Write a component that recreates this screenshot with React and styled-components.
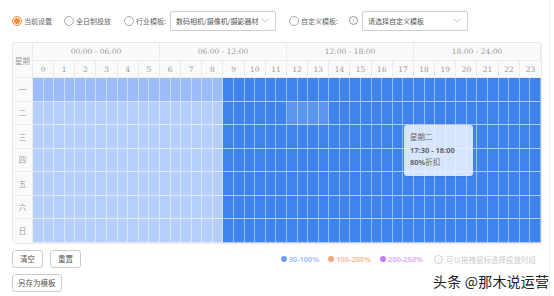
import React from 'react'
import styled, { createGlobalStyle } from 'styled-components'

const GlobalStyle = createGlobalStyle`
  html, body {
    margin: 0;
    padding: 0;
    background: #fff;
  }
  body {
    font-family: "Noto Sans CJK SC", "Noto Sans", sans-serif;
    color: #666;
  }
`

const Page = styled.div`
  position: relative;
  width: 554px;
  height: 296px;
  padding: 10px 0 0 12px;
  box-sizing: border-box;
  overflow: hidden;
`

const EdgeLine = styled.div`
  position: absolute;
  top: 0;
  right: 4px;
  bottom: 0;
  width: 1px;
  background: #eef0f3;
`

const Toolbar = styled.div`
  display: flex;
  align-items: center;
  height: 21px;
  font-size: 7px;
  color: #666;
`

const RadioLabel = styled.label`
  display: flex;
  align-items: center;
  gap: 2px;
  margin-right: ${({ gap }) => gap || 10}px;
  white-space: nowrap;
`

const RadioDot = styled.span`
  width: 10px;
  height: 10px;
  border-radius: 50%;
  border: 1px solid ${({ checked }) => (checked ? '#fa8c35' : '#aaa')};
  box-sizing: border-box;
  display: flex;
  align-items: center;
  justify-content: center;
  background: #fff;

  &::after {
    content: '';
    display: ${({ checked }) => (checked ? 'block' : 'none')};
    width: 6px;
    height: 6px;
    border-radius: 50%;
    background: #fa8c35;
  }
`

const Select = styled.div`
  width: ${({ w }) => w}px;
  height: 20px;
  box-sizing: border-box;
  border: 1px solid #cfcfcf;
  border-radius: 2px;
  display: flex;
  align-items: center;
  justify-content: space-between;
  padding: 0 6px 0 5px;
  margin-right: ${({ mr }) => mr || 0}px;
  font-size: 7px;
  color: #555;
  white-space: nowrap;
`

const Help = styled.span`
  width: 7px;
  height: 7px;
  border: 1px solid #999;
  border-radius: 50%;
  font-size: 5px;
  line-height: 7px;
  text-align: center;
  color: #999;
  margin: 0 4px 0 1px;
`

const Table = styled.div`
  margin-top: 11px;
  width: 530px;
  border: 1px solid #e8e8e8;
  border-radius: 3px;
  overflow: hidden;
  box-sizing: border-box;
  position: relative;
`

const Head = styled.div`
  display: grid;
  grid-template-columns: 20px repeat(24, 1fr);
  grid-template-rows: 18px 17px;
  background: #fafafa;
  color: #999;
  font-size: 7.5px;
`

const HeadCell = styled.div`
  display: flex;
  align-items: center;
  justify-content: center;
  border-right: 1px solid #ececec;
  border-bottom: 1px solid #ececec;
  font-family: ${({ num }) => (num ? '"DejaVu Serif", serif' : 'inherit')};
  font-size: 7.5px;
  grid-column: ${({ span }) => span || 'auto'};
  grid-row: ${({ rows }) => rows || 'auto'};

  &:last-child {
    border-right: none;
  }
`

const Body = styled.div`
  display: grid;
  grid-template-columns: 20px 1fr;
`

const DayCol = styled.div`
  display: grid;
  grid-template-rows: repeat(7, 1fr);
  background: #fafafa;
  border-right: 1px solid #ececec;
`

const DayCell = styled.div`
  display: flex;
  align-items: center;
  justify-content: center;
  font-size: 7.5px;
  color: #999;
  border-bottom: ${({ last }) => (last ? 'none' : '1px solid #ececec')};
`

const Grid = styled.div`
  display: grid;
  grid-template-columns: repeat(48, 1fr);
  grid-template-rows: repeat(7, 23.5px);
`

const Cell = styled.div`
  background: ${({ tone }) => tone};
  border-right: 1px solid rgba(255, 255, 255, 0.45);
  border-bottom: 1px solid rgba(255, 255, 255, 0.6);
`

const Tooltip = styled.div`
  position: absolute;
  left: 391px;
  top: 82px;
  width: 69px;
  height: 51px;
  box-sizing: border-box;
  padding: 6px 6px;
  background: rgba(236, 242, 253, 0.88);
  border-radius: 3px;
  box-shadow: 0 1px 3px rgba(0, 0, 0, 0.08);
  font-size: 7.5px;
  color: #666;
  line-height: 12.5px;
  display: flex;
  flex-direction: column;
`

const TipLine = styled.div`
  font-weight: ${({ bold }) => (bold ? 700 : 400)};
  font-family: ${({ bold }) => (bold ? '"Noto Sans", sans-serif' : 'inherit')};
`

const Footer = styled.div`
  display: flex;
  justify-content: space-between;
  align-items: flex-start;
  width: 530px;
  margin-top: 6px;
`

const Buttons = styled.div`
  display: flex;
  flex-direction: column;
  gap: 6px;
`

const BtnRow = styled.div`
  display: flex;
  gap: 7px;
`

const Button = styled.button`
  height: 18px;
  padding: 0 ${({ pad }) => pad || 6}px;
  border: 1px solid #ccc;
  border-radius: 3px;
  background: #fff;
  font-family: inherit;
  font-size: 7.5px;
  color: #555;
  cursor: pointer;
`

const Legend = styled.div`
  display: flex;
  align-items: center;
  gap: 9px;
  margin-top: 4px;
  margin-right: 6px;
  font-size: 7.5px;
  font-family: "Noto Sans", sans-serif;
  font-weight: 700;
`

const LegendItem = styled.span`
  display: flex;
  align-items: center;
  gap: 2px;
  color: ${({ color }) => color};

  &::before {
    content: '';
    width: 6px;
    height: 6px;
    border-radius: 50%;
    background: ${({ dot }) => dot};
  }
`

const Hint = styled.span`
  display: flex;
  align-items: center;
  gap: 3px;
  margin-left: 2px;
  color: #ccc;
  font-weight: 400;
  font-family: "Noto Sans CJK SC", sans-serif;
`

const HintIcon = styled.span`
  width: 7px;
  height: 7px;
  border: 1px solid #ccc;
  border-radius: 50%;
  font-size: 5px;
  line-height: 7px;
  text-align: center;
`

const Watermark = styled.div`
  position: absolute;
  left: 433px;
  top: 271px;
  font-size: 14px;
  color: #222;
  letter-spacing: 0.2px;
  text-shadow: 0 0 2px #fff;
  white-space: nowrap;
`

const Chevron = () => (
  <svg width="8" height="5" viewBox="0 0 8 5">
    <path d="M0.5 0.5 L4 4 L7.5 0.5" fill="none" stroke="#bbb" strokeWidth="0.9" />
  </svg>
)

const DAYS = ['一', '二', '三', '四', '五', '六', '日']
const RANGES = ['00:00 - 06:00', '06:00 - 12:00', '12:00 - 18:00', '18:00 - 24:00']

const toneFor = (row, col) => {
  if (col >= 18) {
    if (row === 1 && col >= 24 && col <= 27) return '#5a95f0'
    return '#3f84ee'
  }
  return row === 0 ? '#9dbdf8' : '#b5cefa'
}

const App = () => {
  return (
    <Page>
      <GlobalStyle />
      <EdgeLine />
      <Toolbar>
        <RadioLabel gap={12}>
          <RadioDot checked />
          <span>当前设置</span>
        </RadioLabel>
        <RadioLabel gap={13}>
          <RadioDot />
          <span>全日制投放</span>
        </RadioLabel>
        <RadioLabel gap={4}>
          <RadioDot />
          <span>行业模板:</span>
        </RadioLabel>
        <Select w={106} mr={13}>
          <span>数码相机/摄像机/摄影器材</span>
          <Chevron />
        </Select>
        <RadioLabel gap={0}>
          <RadioDot />
          <span>自定义模板:</span>
        </RadioLabel>
        <Help>?</Help>
        <Select w={106}>
          <span>请选择自定义模板</span>
          <Chevron />
        </Select>
      </Toolbar>

      <Table>
        <Head>
          <HeadCell rows="1 / span 2">星期</HeadCell>
          {RANGES.map((r) => (
            <HeadCell key={r} span="span 6" num>
              {r}
            </HeadCell>
          ))}
          {Array.from({ length: 24 }, (_, h) => (
            <HeadCell key={h} num>
              {h}
            </HeadCell>
          ))}
        </Head>
        <Body>
          <DayCol>
            {DAYS.map((d, i) => (
              <DayCell key={d} last={i === 6}>
                {d}
              </DayCell>
            ))}
          </DayCol>
          <Grid>
            {DAYS.map((d, row) =>
              Array.from({ length: 48 }, (_, col) => <Cell key={`${row}-${col}`} tone={toneFor(row, col)} />)
            )}
          </Grid>
        </Body>
        <Tooltip>
          <TipLine>星期二</TipLine>
          <TipLine bold>17:30 - 18:00</TipLine>
          <TipLine>
            <b style={{ fontFamily: '"Noto Sans", sans-serif' }}>80%</b>折扣
          </TipLine>
        </Tooltip>
      </Table>

      <Footer>
        <Buttons>
          <BtnRow>
            <Button pad={7}>清空</Button>
            <Button pad={7}>重置</Button>
          </BtnRow>
          <BtnRow>
            <Button pad={5}>另存为模板</Button>
          </BtnRow>
        </Buttons>
        <Legend>
          <LegendItem dot="#6f9ff2" color="#a9c3f5">30-100%</LegendItem>
          <LegendItem dot="#f9a77a" color="#f7c1a3">100-200%</LegendItem>
          <LegendItem dot="#c77af2" color="#dcb2f5">200-250%</LegendItem>
          <Hint>
            <HintIcon>!</HintIcon>
            可以拖拽鼠标选择投放时段
          </Hint>
        </Legend>
      </Footer>

      <Watermark>头条 @那木说运营</Watermark>
    </Page>
  )
}

export default App
